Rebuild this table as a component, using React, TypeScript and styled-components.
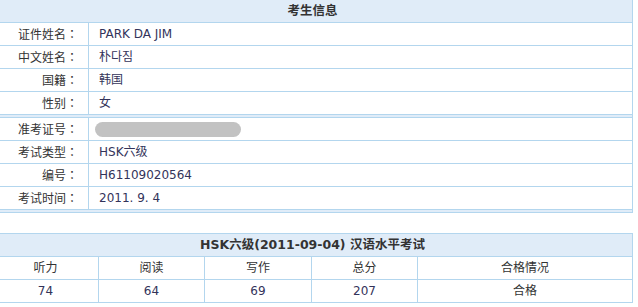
import { FunctionComponent, Fragment } from "react";
import styled, { createGlobalStyle } from "styled-components";

const GlobalStyle = createGlobalStyle`
  html, body {
    margin: 0;
    padding: 0;
    background: #ffffff;
    overflow: hidden;
  }
  body {
    font-family: "DejaVu Sans", "Noto Sans CJK SC", sans-serif;
    font-size: 12px;
    color: #333333;
  }
`;

const PageRoot = styled.div`
  width: 641px;
  margin: -1px 0 0 -8px;
  display: flex;
  flex-direction: column;
  gap: 20px;
`;

const InfoTable = styled.div`
  display: grid;
  grid-template-columns: 96px 1fr;
  border: 1px solid #b3d6ee;
  border-bottom: none;
`;

const ScoreTable = styled.div`
  display: grid;
  grid-template-columns: 106px 106px 107px 106px 1fr;
  border: 1px solid #b3d6ee;
  border-bottom: none;
`;

const TableTitle = styled.div<{ $span: number }>`
  grid-column: span ${(p) => p.$span};
  height: 22px;
  line-height: 22px;
  background: #e0ecf8;
  border-bottom: 1px solid #b3d6ee;
  text-align: center;
  font-weight: 700;
  font-size: 12.5px;
  color: #333333;
`;

const Spacer = styled.div`
  grid-column: span 2;
  height: 2px;
  background: #e0ecf8;
  border-bottom: 1px solid #b3d6ee;
`;

const Label = styled.div`
  height: 22px;
  line-height: 22px;
  padding-right: 10px;
  text-align: right;
  border-right: 1px solid #b3d6ee;
  border-bottom: 1px solid #b3d6ee;
  color: #333333;
  font-family: "Noto Sans CJK SC", sans-serif;
`;

// centred full-width colon, as the old Song fonts draw it
const Colon = styled.span`
  font-family: "Noto Sans CJK JP", sans-serif;
`;

const Value = styled.div`
  height: 22px;
  line-height: 22px;
  padding-left: 10px;
  border-bottom: 1px solid #b3d6ee;
  color: #33335a;
  display: flex;
  align-items: center;
`;

const Masked = styled.span`
  display: block;
  width: 146px;
  height: 15px;
  margin-left: -4px;
  border-radius: 8px;
  background: #c2c2c2;
  filter: blur(0.6px);
`;

const ScoreCell = styled.div<{ $last?: boolean; $dark?: boolean }>`
  height: 22px;
  line-height: 22px;
  text-align: center;
  border-right: ${(p) => (p.$last ? "none" : "1px solid #b3d6ee")};
  border-bottom: 1px solid #b3d6ee;
  color: ${(p) => (p.$dark ? "#333333" : "#33335a")};
`;

const info1 = [
  ["证件姓名", "PARK DA JIM"],
  ["中文姓名", "朴다짐"],
  ["国籍", "韩国"],
  ["性别", "女"],
];

const info2 = [
  ["准考证号", ""],
  ["考试类型", "HSK六级"],
  ["编号", "H61109020564"],
  ["考试时间", "2011. 9. 4"],
];

const heads = ["听力", "阅读", "写作", "总分", "合格情况"];
const scores = ["74", "64", "69", "207", "合格"];

const App: FunctionComponent = () => {
  return (
    <>
      <GlobalStyle />
      <PageRoot>
        <InfoTable>
          <TableTitle $span={2}>考生信息</TableTitle>
          {info1.map(([k, v]) => (
            <Fragment key={k}>
              <Label>
                {k}
                <Colon>：</Colon>
              </Label>
              <Value>{v}</Value>
            </Fragment>
          ))}
          <Spacer />
          {info2.map(([k, v]) => (
            <Fragment key={k}>
              <Label>
                {k}
                <Colon>：</Colon>
              </Label>
              <Value>{v ? v : <Masked />}</Value>
            </Fragment>
          ))}
          <Spacer />
        </InfoTable>
        <ScoreTable>
          <TableTitle $span={5}>HSK六级(2011-09-04) 汉语水平考试</TableTitle>
          {heads.map((h, i) => (
            <ScoreCell key={h} $last={i === 4} $dark>
              {h}
            </ScoreCell>
          ))}
          {scores.map((s, i) => (
            <ScoreCell key={i} $last={i === 4} $dark={i === 4}>
              {s}
            </ScoreCell>
          ))}
        </ScoreTable>
      </PageRoot>
    </>
  );
};

export default App;
